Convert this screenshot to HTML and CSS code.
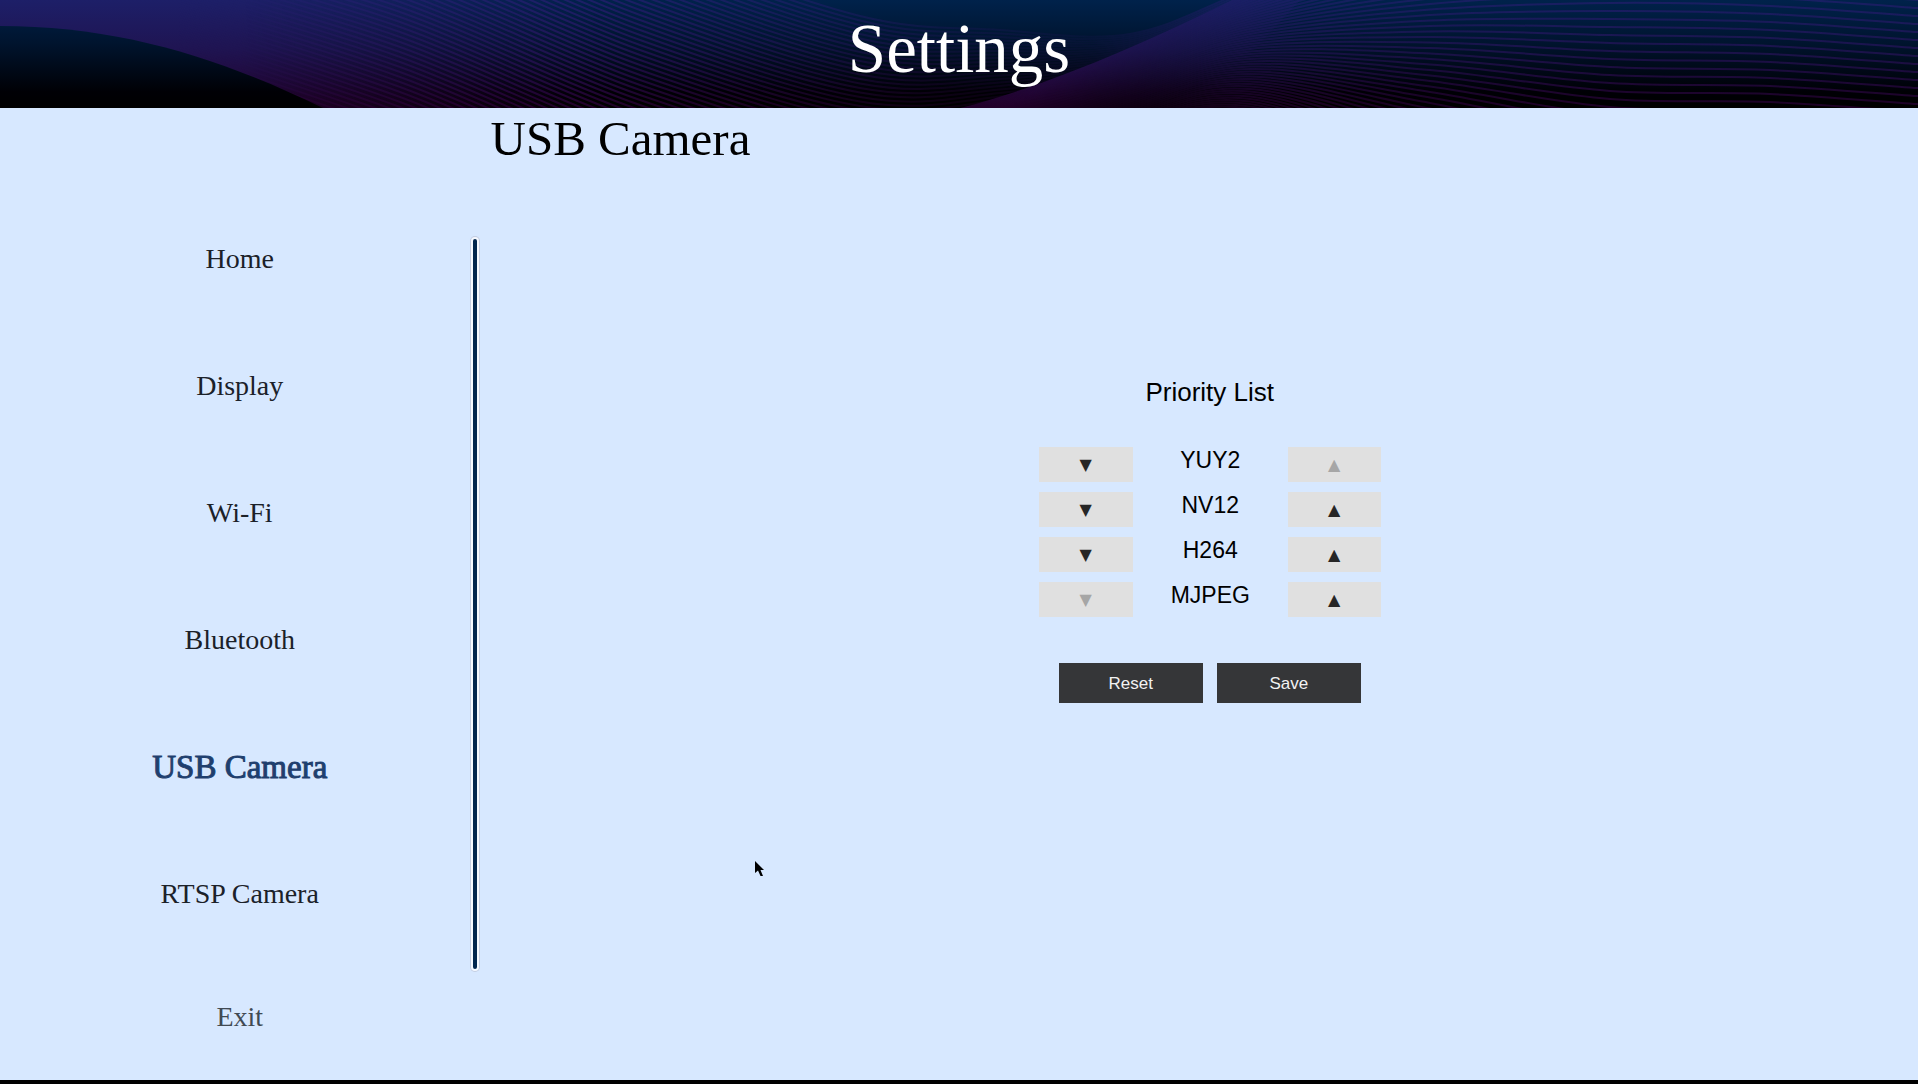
FILE: index.html
```html
<!DOCTYPE html>
<html lang="en">
<head>
  <meta charset="utf-8">
  <meta name="viewport" content="width=device-width, initial-scale=1">
  <title>Settings</title>
  <link rel="stylesheet" href="styles.css">
</head>
<body>
  <header class="banner">
    <svg class="banner-art" viewBox="0 0 1918 108" preserveAspectRatio="none" aria-hidden="true">
      <defs>
        <linearGradient id="night" gradientUnits="userSpaceOnUse" x1="0" y1="0" x2="0" y2="108">
          <stop offset="0" stop-color="#00224b"/>
          <stop offset="0.4" stop-color="#00142e"/>
          <stop offset="0.85" stop-color="#000005"/>
          <stop offset="1" stop-color="#000000"/>
        </linearGradient>
        <linearGradient id="violet" gradientUnits="userSpaceOnUse" x1="0" y1="0" x2="0" y2="108">
          <stop offset="0" stop-color="#1d1f68"/>
          <stop offset="0.45" stop-color="#1f1452"/>
          <stop offset="1" stop-color="#22002a"/>
        </linearGradient>
        <linearGradient id="fadeRight">
          <stop offset="0" stop-color="#fff"/>
          <stop offset="0.4" stop-color="#fff"/>
          <stop offset="1" stop-color="#000"/>
        </linearGradient>
        <linearGradient id="fadeWedge" gradientUnits="userSpaceOnUse" x1="1130" y1="40" x2="1165" y2="105">
          <stop offset="0" stop-color="#fff"/>
          <stop offset="1" stop-color="#000"/>
        </linearGradient>
        <linearGradient id="lineStrength" gradientUnits="userSpaceOnUse" x1="0" y1="0" x2="1918" y2="0">
          <stop offset="0.3" stop-color="#fff"/>
          <stop offset="0.42" stop-color="#aaa"/>
          <stop offset="0.5" stop-color="#555"/>
          <stop offset="0.57" stop-color="#333"/>
          <stop offset="0.65" stop-color="#aaa"/>
          <stop offset="0.8" stop-color="#ddd"/>
        </linearGradient>
        <mask id="leftMask"><rect width="600" height="108" fill="url(#fadeRight)"/></mask>
        <mask id="wedgeMask"><rect width="1918" height="108" fill="url(#fadeWedge)"/></mask>
        <mask id="lineMask"><rect width="1918" height="108" fill="url(#lineStrength)"/></mask>
      </defs>
      <rect width="1918" height="108" fill="url(#night)"/>
      <rect width="600" height="108" fill="url(#violet)" mask="url(#leftMask)"/>
      <path d="M960 108C1040 88 1140 46 1232 0H1300L1200 108Z" fill="url(#violet)" mask="url(#wedgeMask)"/>
      <g id="waves" fill="none" stroke="url(#violet)" stroke-width="2" mask="url(#lineMask)"></g>
      <path d="M0 26C120 26 220 58 323 108H0Z" fill="url(#night)"/>
    </svg>
    <h1 class="banner-title">Settings</h1>
  </header>

  <div class="layout">
    <aside class="sidebar">
      <nav class="menu" aria-label="Settings sections">
        <a class="menu-link" href="#home">Home</a>
        <a class="menu-link" href="#display">Display</a>
        <a class="menu-link" href="#wifi">Wi-Fi</a>
        <a class="menu-link" href="#bluetooth">Bluetooth</a>
        <a class="menu-link menu-link-active" href="#usb" aria-current="page">USB Camera</a>
        <a class="menu-link" href="#rtsp">RTSP Camera</a>
      </nav>
      <a class="menu-link exit-link" href="#exit">Exit</a>
    </aside>
    <div class="divider"></div>
    <main class="content">
      <h2 class="page-title">USB Camera</h2>
      <section class="priority">
        <h3 class="priority-title">Priority List</h3>
        <ol class="priority-list">
          <li class="priority-row">
            <button class="arrow" type="button" aria-label="Move YUY2 down">▼</button>
            <span class="format">YUY2</span>
            <button class="arrow" type="button" aria-label="Move YUY2 up" disabled>▲</button>
          </li>
          <li class="priority-row">
            <button class="arrow" type="button" aria-label="Move NV12 down">▼</button>
            <span class="format">NV12</span>
            <button class="arrow" type="button" aria-label="Move NV12 up">▲</button>
          </li>
          <li class="priority-row">
            <button class="arrow" type="button" aria-label="Move H264 down">▼</button>
            <span class="format">H264</span>
            <button class="arrow" type="button" aria-label="Move H264 up">▲</button>
          </li>
          <li class="priority-row">
            <button class="arrow" type="button" aria-label="Move MJPEG down" disabled>▼</button>
            <span class="format">MJPEG</span>
            <button class="arrow" type="button" aria-label="Move MJPEG up">▲</button>
          </li>
        </ol>
        <div class="actions">
          <button class="action" type="button">Reset</button>
          <button class="action" type="button">Save</button>
        </div>
      </section>
    </main>
  </div>
  <footer class="bottom-bar"></footer>

  <svg class="pointer" width="10" height="17" viewBox="0 0 10 17" aria-hidden="true">
    <path d="M0 0V12L3 9.500L5.500 15H8L5.500 9H9Z" fill="#000"/>
  </svg>
  <script src="waves.js"></script>
</body>
</html>
```

FILE: styles.css
```css
* {
  box-sizing: border-box;
}

body {
  margin: 0;
  min-height: 100vh;
  position: relative;
  display: flex;
  flex-direction: column;
  background: #d7e8ff;
  color: #000;
  font-family: "Liberation Sans", Arial, sans-serif;
}

h1,
h2,
h3,
ol {
  margin: 0;
  padding: 0;
  font-weight: 400;
}

.banner {
  display: grid;
  height: 108px;
  overflow: hidden;
}

.banner-art,
.banner-title {
  grid-area: 1 / 1;
}

.banner-art {
  display: block;
  width: 100%;
  height: 108px;
}

.banner-title {
  z-index: 1;
  place-self: start center;
  padding-top: 9px;
  color: #fff;
  font-family: "Liberation Serif", "Times New Roman", serif;
  font-size: 69px;
  line-height: 80px;
}

.layout {
  flex: 1;
  display: grid;
  grid-template-columns: minmax(200px, 25%) 1fr;
}

.sidebar {
  grid-area: 1 / 1;
  display: flex;
  flex-direction: column;
  padding-top: 88px;
}

.menu {
  flex: 1;
  display: flex;
  flex-direction: column;
}

.menu-link {
  flex: 1;
  display: flex;
  align-items: center;
  justify-content: center;
  color: #1b2129;
  font-family: "Liberation Serif", "Times New Roman", serif;
  font-size: 28px;
  line-height: 32px;
  text-decoration: none;
}

.menu-link-active {
  color: #1f3f6e;
  font-size: 33px;
  -webkit-text-stroke: 1px #1f3f6e;
}

.exit-link {
  flex: none;
  height: 123px;
  padding-bottom: 4px;
  color: #414a53;
}

.divider {
  grid-area: 1 / 1;
  justify-self: end;
  width: 8px;
  margin: 129px 1px 109px 0;
  border: 2px solid #f4f8ff;
  border-radius: 4px;
  background: #00254d;
  box-shadow: 0 0 0 1px #c3cde2;
}

.content {
  grid-area: 1 / 2;
  padding-left: 22px;
}

.page-title {
  margin-left: -11px;
  padding-top: 1px;
  font-family: "Liberation Serif", "Times New Roman", serif;
  font-size: 49px;
  line-height: 60px;
}

.priority {
  display: flex;
  flex-direction: column;
  align-items: center;
  padding-top: 208px;
}

.priority-title {
  font-size: 26px;
  line-height: 30px;
}

.priority-list {
  display: flex;
  flex-direction: column;
  gap: 10px;
  margin: 40px 0 46px;
  list-style: none;
}

.priority-row {
  display: grid;
  grid-template-columns: 94px 155px 93px;
}

.arrow {
  height: 35px;
  padding: 0;
  border: 0;
  background: #e0e0e0;
  color: #262626;
  font-family: "DejaVu Sans", sans-serif;
  font-size: 16px;
}

.arrow:disabled {
  color: #a6a6a6;
}

.format {
  font-size: 23px;
  line-height: 26px;
  text-align: center;
}

.actions {
  display: flex;
  gap: 14px;
}

.action {
  width: 144px;
  height: 40px;
  padding: 2px 0 0;
  border: 0;
  background: #353638;
  color: #f2f2f2;
  font-family: inherit;
  font-size: 17px;
}

.bottom-bar {
  height: 4px;
  background: #000;
}

.pointer {
  position: absolute;
  left: 755px;
  top: 861px;
}
```

FILE: waves.js
```js
// Draws the banner's wave lines: each passes through one point per column.
const group = document.getElementById("waves");

for (let a = -60; a <= 290; a += 5) {
  const points = [
    [180, 0.9 * a - 150],
    [400, a - 98],
    [640, a],
    [860, 0.9 * a + 70],
    [1000, 0.7 * a + 72],
    [1130, 0.4 * a + 58],
    [1250, 0.5 * a + 19],
    [1430, 1.1 * a - 18],
    [1610, 1.6 * a - 37],
    [1770, 1.6 * a - 34],
    [1930, 1.6 * a - 23],
  ];
  let d = `M${points[0]}`;
  for (let i = 0; i < points.length - 1; i++) {
    const p0 = points[Math.max(i - 1, 0)];
    const p1 = points[i];
    const p2 = points[i + 1];
    const p3 = points[Math.min(i + 2, points.length - 1)];
    const c1 = [p1[0] + (p2[0] - p0[0]) / 6, p1[1] + (p2[1] - p0[1]) / 6];
    const c2 = [p2[0] - (p3[0] - p1[0]) / 6, p2[1] - (p3[1] - p1[1]) / 6];
    d += `C${c1} ${c2} ${p2}`;
  }
  const path = document.createElementNS("http://www.w3.org/2000/svg", "path");
  path.setAttribute("d", d);
  group.append(path);
}
```
